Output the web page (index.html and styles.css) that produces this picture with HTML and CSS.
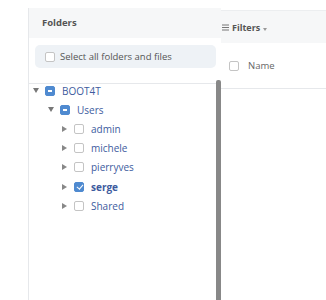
FILE: index.html
```html
<!DOCTYPE html>
<html lang="en">
<head>
    <meta charset="UTF-8">
    <title>Folders</title>
    <link rel="stylesheet" href="styles.css">
</head>
<body>
    <div class="folders-panel">
        <div class="panel-head">Folders</div>
        <div class="select-wrap">
            <label class="select-all">
                <span class="box"></span>
                <span>Select all folders and files</span>
            </label>
        </div>
        <div class="tree-area">
            <ul class="tree">
                <li class="node">
                    <span class="caret open"></span>
                    <span class="box partial"></span>
                    <span class="label">BOOT4T</span>
                </li>
                <li class="node lvl1">
                    <span class="caret open"></span>
                    <span class="box partial"></span>
                    <span class="label">Users</span>
                </li>
                <li class="node lvl2">
                    <span class="caret"></span>
                    <span class="box"></span>
                    <span class="label">admin</span>
                </li>
                <li class="node lvl2">
                    <span class="caret"></span>
                    <span class="box"></span>
                    <span class="label">michele</span>
                </li>
                <li class="node lvl2">
                    <span class="caret"></span>
                    <span class="box"></span>
                    <span class="label">pierryves</span>
                </li>
                <li class="node lvl2 selected">
                    <span class="caret"></span>
                    <span class="box checked"></span>
                    <span class="label">serge</span>
                </li>
                <li class="node lvl2">
                    <span class="caret"></span>
                    <span class="box"></span>
                    <span class="label">Shared</span>
                </li>
            </ul>
            <div class="scrollbar"></div>
        </div>
    </div>

    <div class="files-panel">
        <div class="filters-head">
            <svg class="list-icon" width="7" height="7" viewBox="0 0 7 7">
                <path d="M0 1h7M0 3.5h7M0 6h7" stroke="#777" stroke-width="1"/>
            </svg>
            <span class="filters-title">Filters</span>
            <span class="filters-caret"></span>
        </div>
        <div class="col-row">
            <span class="box"></span>
            <span class="col-name">Name</span>
        </div>
    </div>
</body>
</html>
```

FILE: styles.css
```css
:root {
    --line: #e6e8eb;
    --head-bg: #f6f7f8;
    --tree-blue: #3d5b9e;
    --check-blue: #4f8ad0;
}

body {
    margin: 0;
    height: 300px;
    overflow: hidden;
    background: #fff;
    font-family: "Open Sans", "Liberation Sans", sans-serif;
    display: flex;
    align-items: flex-start;
    padding-left: 28px;
}

/* left: folder tree */
.folders-panel {
    width: 192px;
    margin-top: 8px;
    height: 292px;
    border-left: 1px solid var(--line);
    display: flex;
    flex-direction: column;
}

.panel-head {
    height: 30px;
    line-height: 30px;
    background: var(--head-bg);
    padding-left: 13px;
    font-size: 9.5px;
    font-weight: bold;
    color: #555;
}

.select-wrap {
    padding: 7px 4px 15px 6px;
    border-bottom: 1px solid var(--line);
    margin-right: 5px;
}

.select-all {
    height: 23px;
    background: #eef2f6;
    border-radius: 5px;
    display: flex;
    align-items: center;
    gap: 5px;
    padding-left: 10px;
    font-size: 9.5px;
    color: #555;
    margin-right: -4px;
}

.box {
    width: 8px;
    height: 8px;
    border: 1px solid #c4c4c4;
    border-radius: 2px;
    background: #fff;
    flex: none;
    position: relative;
}

.box.partial,
.box.checked {
    border-color: var(--check-blue);
    background: var(--check-blue);
}

.box.partial::after {
    content: "";
    position: absolute;
    left: 2px;
    right: 2px;
    top: 3.5px;
    height: 1.5px;
    background: #fff;
}

.box.checked::after {
    content: "";
    position: absolute;
    left: 2.5px;
    top: 0;
    width: 2.5px;
    height: 5px;
    border: solid #fff;
    border-width: 0 1.5px 1.5px 0;
    transform: rotate(40deg);
}

.tree-area {
    flex: 1;
    display: flex;
    margin-top: -4px;
}

.tree {
    list-style: none;
    margin: 0;
    padding: 1px 0 0 4px;
    flex: 1;
}

.node {
    height: 19.2px;
    display: flex;
    align-items: center;
    gap: 6px;
    font-size: 10px;
    color: var(--tree-blue);
}

.lvl1 { padding-left: 15px; }
.lvl2 { padding-left: 29px; }

.node.selected .label { font-weight: bold; }

.node .box { margin-right: 1px; }

.caret {
    width: 0;
    height: 0;
    margin-right: 1px;
    border-top: 3.5px solid transparent;
    border-bottom: 3.5px solid transparent;
    border-left: 5px solid #888;
}

.caret.open {
    margin-right: 0;
    border-left: 3px solid transparent;
    border-right: 3px solid transparent;
    border-top: 5.5px solid #777;
    border-bottom: 0;
}

.scrollbar {
    width: 5px;
    background: #888;
    border-radius: 2px 2px 0 0;
    flex: none;
}

/* right: file list */
.files-panel {
    flex: 1;
    margin-top: 10px;
    border-top: 1px solid #eceef0;
}

.filters-head {
    height: 32px;
    background: var(--head-bg);
    display: flex;
    align-items: center;
    padding-left: 1px;
    gap: 3px;
}

.filters-title {
    font-size: 9px;
    font-weight: bold;
    color: #555;
}

.filters-caret {
    margin-top: 4px;
    width: 0;
    height: 0;
    border-left: 2.5px solid transparent;
    border-right: 2.5px solid transparent;
    border-top: 3.5px solid #999;
}

.col-row {
    height: 45px;
    border-bottom: 1px solid var(--line);
    display: flex;
    align-items: center;
    gap: 9px;
    padding-left: 8px;
    font-size: 9.5px;
    color: #666;
}
```
